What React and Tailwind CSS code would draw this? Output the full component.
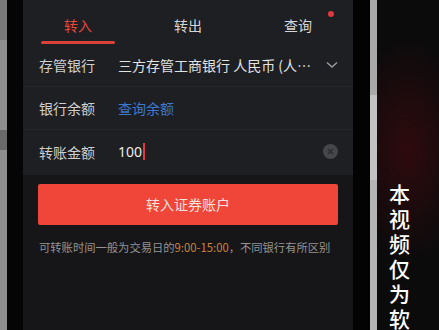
import React from 'react';

const font = { fontFamily: '"Noto Sans CJK SC", "Noto Sans", sans-serif' };

const Row = ({ label, children, border = true }) => (
  <div className={`flex items-center h-[43px] pl-[16px] pr-[15px] ${border ? 'border-b border-[#232428]' : ''}`}>
    <span className="w-[56px] shrink-0 text-[14px] text-[#cfcfcf] leading-none">{label}</span>
    <div className="flex-1 flex items-center ml-[23px] min-w-0">{children}</div>
  </div>
);

export default function App() {
  return (
    <div className="w-[439px] h-[330px] flex overflow-hidden bg-black" style={font}>
      {/* left bezel */}
      <div className="w-[7px] bg-[#8f8f8f] flex flex-col">
        <div className="h-[40px] bg-[#7a7a7a]" />
        <div className="h-[90px]" />
        <div className="h-[20px] bg-[#6a6a6a]" />
      </div>
      <div className="w-[16px] bg-[#050505]" />

      {/* phone screen */}
      <div className="w-[330px] flex flex-col bg-[#161517]">
        <div className="bg-[#1e1f23]">
          {/* tabs */}
          <div className="relative h-[44px] flex pt-[15px]">
            {['转入', '转出', '查询'].map((t, i) => (
              <div key={t} className="flex-1 flex flex-col items-center">
                <span className={`text-[14px] leading-[20px] ${i === 0 ? 'text-[#e8473b]' : 'text-[#d6d6d6]'}`}>{t}</span>
                {i === 0 && <div className="mt-[6px] w-[74px] h-[3px] rounded-full bg-[#d9423a]" />}
              </div>
            ))}
            <span className="absolute left-[305px] top-[11px] w-[6px] h-[6px] rounded-full bg-[#e0383c]" />
          </div>

          <Row label="存管银行">
            <span className="flex-1 text-[14px] text-[#e2e2e2] leading-none whitespace-nowrap">三方存管工商银行 人民币 (人…</span>
            <svg width="12" height="8" viewBox="0 0 12 8" className="ml-[8px]">
              <path d="M1 1.5 L6 6 L11 1.5" fill="none" stroke="#9a9a9a" strokeWidth="1.4" />
            </svg>
          </Row>
          <Row label="银行余额">
            <span className="text-[14px] text-[#3d78cc] leading-none">查询余额</span>
          </Row>
          <Row label="转账金额" border={false}>
            <span className="text-[14px] text-[#ececec] leading-none" style={{ fontFamily: '"Noto Sans", sans-serif' }}>100</span>
            <span className="w-[2px] h-[17px] bg-[#e0383c] ml-[1px]" />
            <span className="ml-auto w-[15px] h-[15px] rounded-full bg-[#46474b] flex items-center justify-center">
              <svg width="7" height="7" viewBox="0 0 7 7">
                <path d="M1 1 L6 6 M6 1 L1 6" stroke="#2a2b2e" strokeWidth="1.3" />
              </svg>
            </span>
          </Row>
          <div className="h-[2px]" />
        </div>

        <div className="px-[15px] pt-[9px]">
          <div className="h-[41px] rounded-[2px] bg-[#f0463a] flex items-center justify-center">
            <span className="text-[14px] text-[#f6e3df]">转入证券账户</span>
          </div>
          <p className="mt-[14px] pl-[1px] text-[11.3px] leading-[16px] text-[#939393] whitespace-nowrap">
            可转账时间一般为交易日的<span className="text-[#c9873c]">9:00-15:00</span>，不同银行有所区别
          </p>
        </div>
      </div>

      <div className="w-[17px] bg-[#030303]" />
      {/* right bezel strip */}
      <div className="w-[7px] flex flex-col">
        <div className="h-[95px] bg-[#a9a9a9]" />
        <div className="h-[85px] bg-[#c2c2c2]" />
        <div className="flex-1 bg-[#b4b4b4]" />
      </div>

      {/* background with caption */}
      <div className="flex-1 relative bg-[#0c0b0c] overflow-hidden">
        <div
          className="absolute inset-0"
          style={{ background: 'radial-gradient(ellipse 60px 110px at 30px 150px, rgba(70,10,14,0.6), rgba(12,11,12,0) 100%)' }}
        />
        <div className="relative pl-[12px] pt-[181px]">
          <p className="w-[22px] break-all text-[21px] leading-[25px] text-white font-medium">本视频仅为软件</p>
        </div>
      </div>
    </div>
  );
}
